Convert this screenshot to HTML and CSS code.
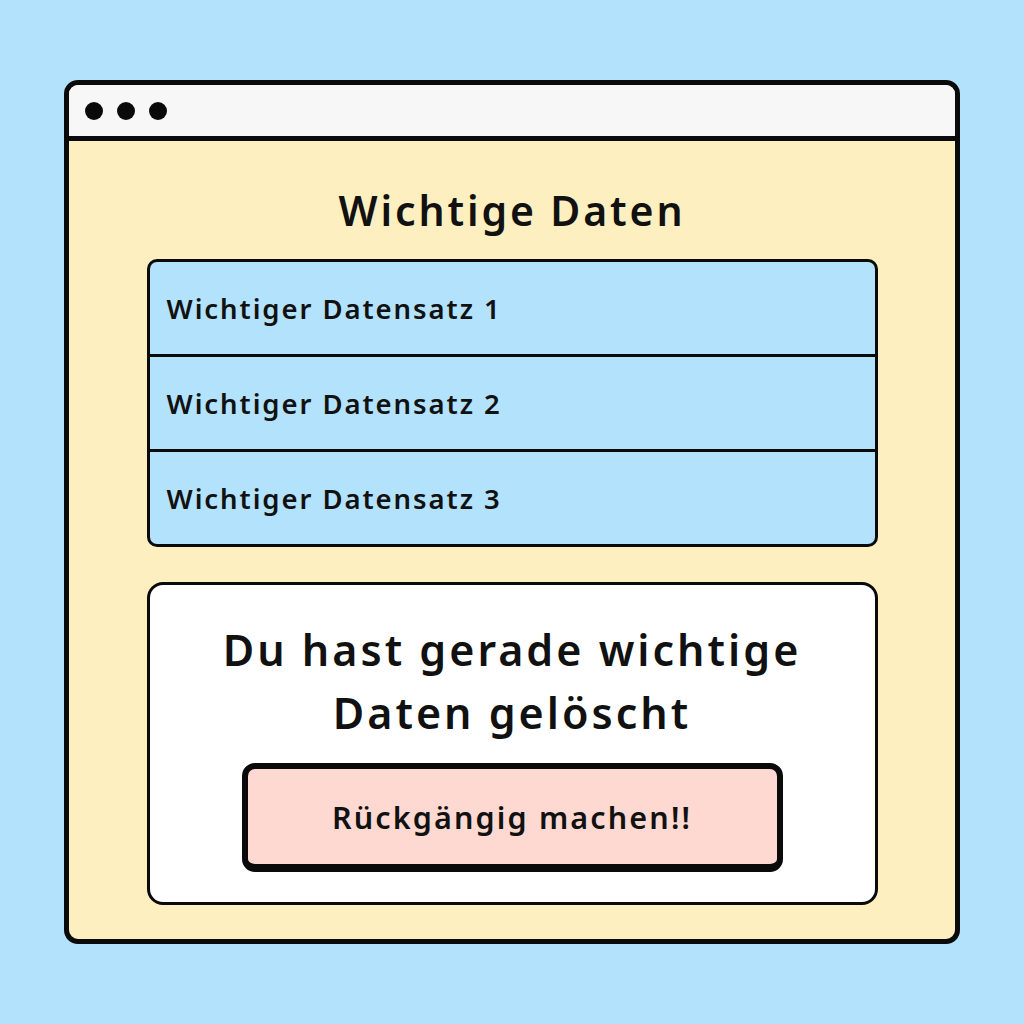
FILE: index.html
```html
<!DOCTYPE html>
<html lang="de">
<head>
  <meta charset="UTF-8">
  <meta name="viewport" content="width=device-width, initial-scale=1.0">
  <title>Wichtige Daten</title>
  <link rel="stylesheet" href="styles.css">
</head>
<body>
  <div class="window">
    <div class="titlebar">
      <span class="dot"></span>
      <span class="dot"></span>
      <span class="dot"></span>
    </div>
    <div class="content">
      <h1 class="title">Wichtige Daten</h1>
      <ul class="records">
        <li>Wichtiger Datensatz 1</li>
        <li>Wichtiger Datensatz 2</li>
        <li>Wichtiger Datensatz 3</li>
      </ul>
      <div class="notice">
        <h2>Du hast gerade wichtige<br>Daten gelöscht</h2>
        <button class="undo">Rückgängig machen!!</button>
      </div>
    </div>
  </div>
</body>
</html>
```

FILE: styles.css
```css
body {
  margin: 0;
  background: #b3e2fd;
  font-family: "Noto Sans", sans-serif;
  color: #111;
}

.window {
  box-sizing: border-box;
  width: 896px;
  height: 864px;
  margin: 80px 0 0 64px;
  border: 5px solid #0a0a0a;
  border-radius: 14px;
  overflow: hidden;
  background: #fdefc0;
}

.titlebar {
  height: 51px;
  background: #f7f7f7;
  border-bottom: 5px solid #0a0a0a;
  display: flex;
  align-items: center;
  gap: 14px;
  padding-left: 16px;
}

.dot {
  width: 18px;
  height: 18px;
  border-radius: 50%;
  background: #0a0a0a;
}

.content {
  padding-top: 45px;
}

.title {
  margin: 0;
  font-size: 41px;
  line-height: 48px;
  font-weight: 600;
  letter-spacing: 0.07em;
  text-align: center;
}

.records {
  list-style: none;
  margin: 25px auto 0;
  padding: 0;
  width: 731px;
  box-sizing: border-box;
  border: 3px solid #0a0a0a;
  border-radius: 10px;
  background: #b3e2fd;
}

.records li {
  height: 92px;
  display: flex;
  align-items: center;
  padding-left: 17px;
  font-size: 27.5px;
  font-weight: 600;
  letter-spacing: 0.07em;
}

.records li + li {
  border-top: 3px solid #0a0a0a;
}

.notice {
  box-sizing: border-box;
  width: 731px;
  height: 323px;
  margin: 35px auto 0;
  padding-top: 33px;
  border: 3px solid #0a0a0a;
  border-radius: 16px;
  background: #fff;
  text-align: center;
}

.notice h2 {
  margin: 0;
  font-size: 43px;
  line-height: 63px;
  font-weight: 600;
  letter-spacing: 0.07em;
}

.undo {
  display: block;
  box-sizing: border-box;
  width: 541px;
  height: 109px;
  margin: 19px auto 0;
  border: 6px solid #0a0a0a;
  border-bottom-width: 8px;
  border-radius: 13px;
  background: #fed9d2;
  font-family: inherit;
  font-size: 30.5px;
  font-weight: 600;
  letter-spacing: 0.07em;
  color: #111;
}
```
